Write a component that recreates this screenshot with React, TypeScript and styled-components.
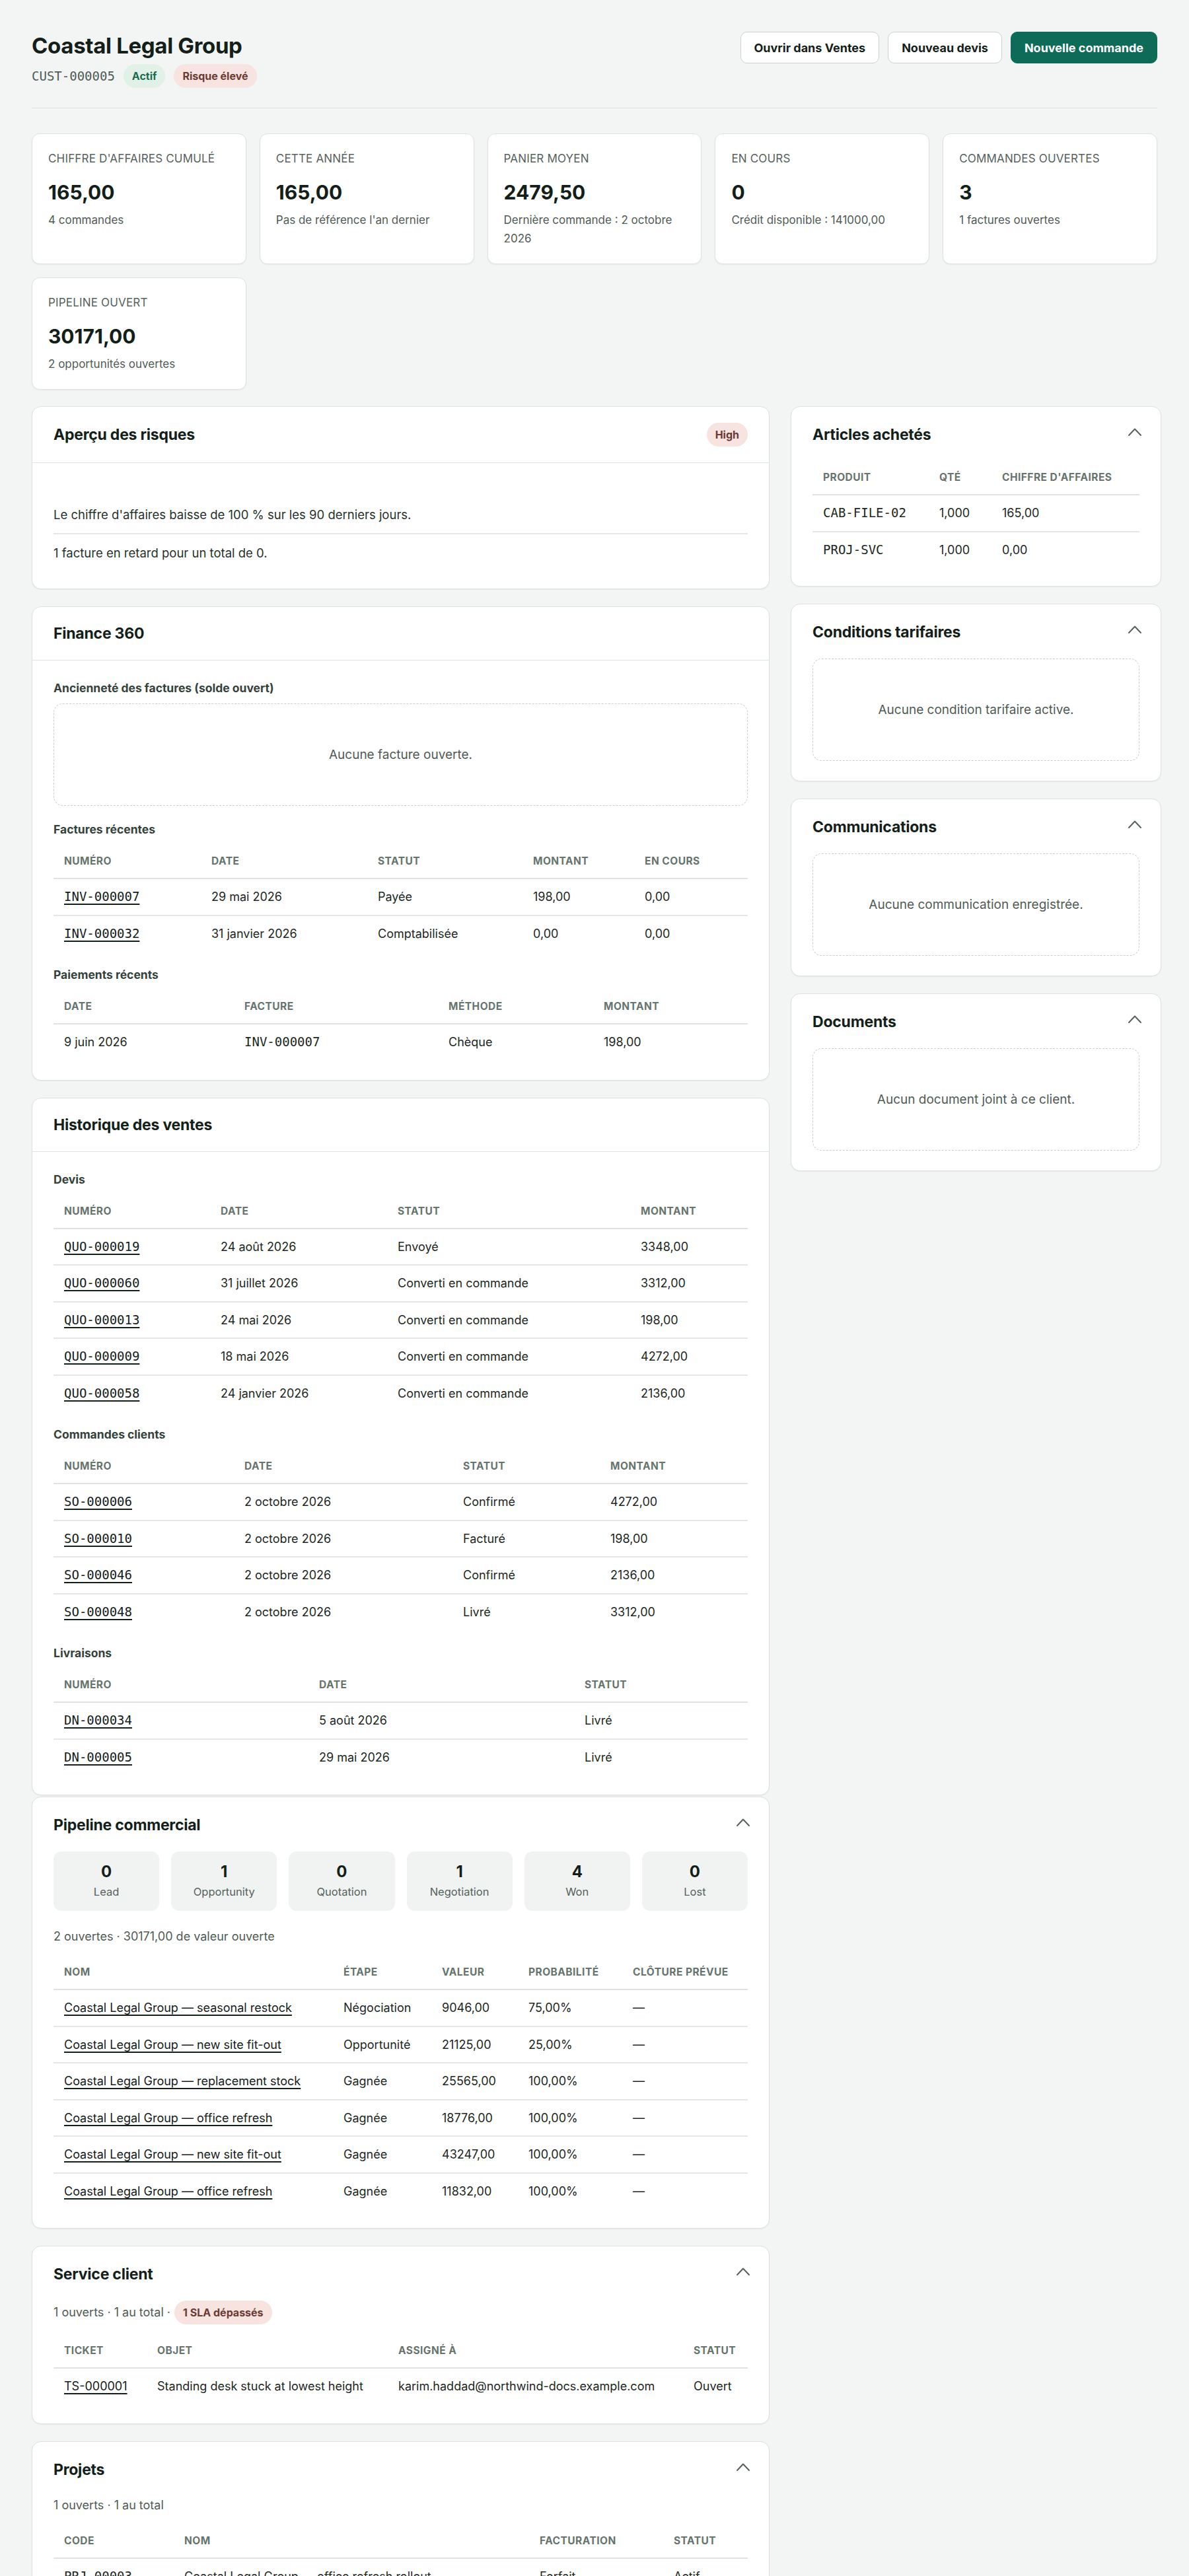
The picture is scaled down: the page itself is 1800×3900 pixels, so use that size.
import React from 'react';
import styled, { createGlobalStyle } from 'styled-components';

const GlobalStyle = createGlobalStyle`
  body {
    margin: 0;
    background: #f3f5f4;
    color: #13201a;
    font-family: Inter, 'Noto Sans', 'Liberation Sans', sans-serif;
    font-size: 18px;
  }
  * {
    box-sizing: border-box;
  }
`;

const MONO = "'DejaVu Sans Mono', 'Liberation Mono', monospace";

const Page = styled.div`
  padding: 48px;
`;

const Header = styled.header`
  display: flex;
  justify-content: space-between;
  align-items: flex-start;
  padding-bottom: 30px;
  border-bottom: 1px solid #dbe2df;
`;

const Title = styled.h1`
  margin: 0;
  font-size: 33px;
  line-height: 42px;
  font-weight: 700;
  letter-spacing: -0.01em;
`;

const Meta = styled.div`
  display: flex;
  align-items: center;
  gap: 13px;
  margin-top: 7px;
`;

const Mono = styled.span`
  font-family: ${MONO};
  font-size: 19px;
  line-height: 1;
`;

const MetaId = styled(Mono)`
  color: #4f5b55;
`;

const Badge = styled.span<{ $tone: 'green' | 'red' }>`
  display: inline-flex;
  align-items: center;
  height: 36px;
  padding: 0 13px;
  border-radius: 999px;
  font-size: 16px;
  font-weight: 700;
  background: ${(p) => (p.$tone === 'green' ? '#e2f1e8' : '#f7e3e0')};
  color: ${(p) => (p.$tone === 'green' ? '#1b6b4f' : '#6b3a33')};
`;

const Actions = styled.div`
  display: flex;
  gap: 13px;
`;

const Button = styled.button<{ $primary?: boolean }>`
  height: 48px;
  padding: 0 20px;
  border-radius: 10px;
  font-family: inherit;
  font-size: 18px;
  font-weight: 700;
  border: 1px solid ${(p) => (p.$primary ? '#0e6b58' : '#c9d2ce')};
  background: ${(p) => (p.$primary ? '#0e6b58' : '#fff')};
  color: ${(p) => (p.$primary ? '#fff' : '#13201a')};
`;

const KpiGrid = styled.div`
  display: grid;
  grid-template-columns: repeat(5, 1fr);
  gap: 20px;
  margin-top: 38px;
`;

const KpiCard = styled.div`
  background: #fff;
  border: 1px solid #dde3df;
  border-radius: 12px;
  padding: 24px;
  box-shadow: 0 1px 2px rgba(20, 32, 26, 0.06);
`;

const KpiLabel = styled.div`
  font-size: 17px;
  line-height: 26px;
  color: #56625c;
  text-transform: uppercase;
  letter-spacing: 0.01em;
`;

const KpiValue = styled.div`
  margin-top: 20px;
  font-size: 30px;
  line-height: 36px;
  font-weight: 700;
`;

const KpiSub = styled.div`
  margin-top: 10px;
  font-size: 17px;
  line-height: 28px;
  color: #4f5b55;
`;

const MainGrid = styled.div`
  display: grid;
  grid-template-columns: 2fr 1fr;
  gap: 32px;
  align-items: start;
  margin-top: 25px;
`;

const Column = styled.div`
  display: flex;
  flex-direction: column;
  gap: 26px;
`;

const Stack = styled.div`
  display: flex;
  flex-direction: column;
  gap: 2px;
`;

const Card = styled.section`
  background: #fff;
  border: 1px solid #dde3df;
  border-radius: 14px;
  box-shadow: 0 1px 2px rgba(20, 32, 26, 0.06);
  overflow: hidden;
`;

const CardHead = styled.div<{ $divided?: boolean }>`
  display: flex;
  justify-content: space-between;
  align-items: center;
  padding: ${(p) => (p.$divided ? '24px 32px' : '26px 32px 0')};
  border-bottom: ${(p) => (p.$divided ? '1px solid #dde3df' : 'none')};
`;

const CardTitle = styled.h2`
  margin: 0;
  font-size: 23px;
  line-height: 32px;
  font-weight: 700;
  letter-spacing: -0.01em;
`;

const Toggle = styled.svg`
  width: 22px;
  height: 16px;
  margin: -8px -4px 0 0;
  fill: none;
  stroke: #56625c;
  stroke-width: 2;
  stroke-linecap: round;
  stroke-linejoin: round;
`;

const CardBody = styled.div<{ $top?: number; $bottom?: number }>`
  padding: ${(p) => p.$top ?? 28}px 32px ${(p) => p.$bottom ?? 30}px;
  display: flex;
  flex-direction: column;
`;

const Block = styled.div`
  & + & {
    margin-top: 22px;
  }
`;

const SubTitle = styled.h3`
  margin: 0 0 9px;
  font-size: 17.5px;
  line-height: 28px;
  font-weight: 700;
  color: #34423b;
`;

const RiskList = styled.ul`
  list-style: none;
  margin: 0;
  padding: 0;
`;

const RiskItem = styled.li`
  padding: 14px 0;
  font-size: 18.5px;
  line-height: 28px;
  color: #26312c;
  & + & {
    border-top: 2px solid #e3e8e5;
  }
`;

const Empty = styled.div`
  height: 155px;
  display: flex;
  align-items: center;
  justify-content: center;
  border: 1.5px dashed #c8d0cc;
  border-radius: 14px;
  color: #4f5b55;
  font-size: 19px;
`;

const Table = styled.table`
  width: 100%;
  border-collapse: collapse;
  table-layout: fixed;
`;

const Col = styled.col<{ $w: number }>`
  width: ${(p) => p.$w}px;
`;

const Th = styled.th`
  text-align: left;
  padding: 13px 16px;
  font-size: 15.5px;
  line-height: 24px;
  font-weight: 700;
  letter-spacing: 0.03em;
  text-transform: uppercase;
  color: #66746d;
  border-bottom: 2px solid #dde3df;
  white-space: nowrap;
`;

const Td = styled.td`
  padding: 13px 16px 12.5px;
  height: 53.5px;
  font-size: 18px;
  line-height: 28px;
  color: #1c2722;
  white-space: nowrap;
  tr + tr > & {
    border-top: 2px solid #e3e8e5;
  }
`;

const Link = styled.a<{ $mono?: boolean }>`
  color: #13201a;
  text-decoration: underline;
  text-underline-offset: 4px;
  text-decoration-thickness: 1.5px;
  font-family: ${(p) => (p.$mono ? MONO : 'inherit')};
  font-size: ${(p) => (p.$mono ? '19px' : 'inherit')};
  line-height: ${(p) => (p.$mono ? 1 : 'inherit')};
`;

const Summary = styled.div`
  display: flex;
  align-items: center;
  gap: 6px;
  font-size: 18px;
  line-height: 28px;
  color: #4f5b55;
  margin-bottom: 15px;
`;

const Stages = styled.div`
  display: grid;
  grid-template-columns: repeat(6, 1fr);
  gap: 18px;
  margin-bottom: 25px;
`;

const Stage = styled.div`
  background: #f0f3f1;
  border-radius: 12px;
  padding: 15px 8px;
  text-align: center;
`;

const StageCount = styled.div`
  font-size: 24px;
  line-height: 32px;
  font-weight: 700;
`;

const StageLabel = styled.div`
  font-size: 16.5px;
  line-height: 28px;
  color: #56625c;
`;

type Cell = React.ReactNode;

const DataTable: React.FC<{ head: string[]; widths: number[]; rows: Cell[][] }> = ({
  head,
  widths,
  rows,
}) => (
  <Table>
    <colgroup>
      {widths.map((w, i) => (
        <Col key={i} $w={w} />
      ))}
    </colgroup>
    <thead>
      <tr>
        {head.map((h) => (
          <Th key={h}>{h}</Th>
        ))}
      </tr>
    </thead>
    <tbody>
      {rows.map((row, i) => (
        <tr key={i}>
          {row.map((c, j) => (
            <Td key={j}>{c}</Td>
          ))}
        </tr>
      ))}
    </tbody>
  </Table>
);

const Collapsible: React.FC<{ title: string; bottom?: number; children: React.ReactNode }> = ({
  title,
  bottom,
  children,
}) => (
  <Card>
    <CardHead>
      <CardTitle>{title}</CardTitle>
      <Toggle viewBox="0 0 22 16">
        <polyline points="2,13 11,3.5 20,13" />
      </Toggle>
    </CardHead>
    <CardBody $top={24} $bottom={bottom ?? 30}>
      {children}
    </CardBody>
  </Card>
);

const kpis = [
  { label: "Chiffre d'affaires cumulé", value: '165,00', sub: '4 commandes' },
  { label: 'Cette année', value: '165,00', sub: "Pas de référence l'an dernier" },
  { label: 'Panier moyen', value: '2479,50', sub: 'Dernière commande : 2 octobre 2026' },
  { label: 'En cours', value: '0', sub: 'Crédit disponible : 141000,00' },
  { label: 'Commandes ouvertes', value: '3', sub: '1 factures ouvertes' },
  { label: 'Pipeline ouvert', value: '30171,00', sub: '2 opportunités ouvertes' },
];

const link = (t: string) => (
  <Link $mono href="#">
    {t}
  </Link>
);

const quotes = [
  ['QUO-000019', '24 août 2026', 'Envoyé', '3348,00'],
  ['QUO-000060', '31 juillet 2026', 'Converti en commande', '3312,00'],
  ['QUO-000013', '24 mai 2026', 'Converti en commande', '198,00'],
  ['QUO-000009', '18 mai 2026', 'Converti en commande', '4272,00'],
  ['QUO-000058', '24 janvier 2026', 'Converti en commande', '2136,00'],
];

const orders = [
  ['SO-000006', '2 octobre 2026', 'Confirmé', '4272,00'],
  ['SO-000010', '2 octobre 2026', 'Facturé', '198,00'],
  ['SO-000046', '2 octobre 2026', 'Confirmé', '2136,00'],
  ['SO-000048', '2 octobre 2026', 'Livré', '3312,00'],
];

const deliveries = [
  ['DN-000034', '5 août 2026', 'Livré'],
  ['DN-000005', '29 mai 2026', 'Livré'],
];

const deals = [
  ['seasonal restock', 'Négociation', '9046,00', '75,00%'],
  ['new site fit-out', 'Opportunité', '21125,00', '25,00%'],
  ['replacement stock', 'Gagnée', '25565,00', '100,00%'],
  ['office refresh', 'Gagnée', '18776,00', '100,00%'],
  ['new site fit-out', 'Gagnée', '43247,00', '100,00%'],
  ['office refresh', 'Gagnée', '11832,00', '100,00%'],
];

const stages = [
  ['0', 'Lead'],
  ['1', 'Opportunity'],
  ['0', 'Quotation'],
  ['1', 'Negotiation'],
  ['4', 'Won'],
  ['0', 'Lost'],
];

const App: React.FC = () => (
  <>
    <GlobalStyle />
    <Page>
      <Header>
        <div>
          <Title>Coastal Legal Group</Title>
          <Meta>
            <MetaId>CUST-000005</MetaId>
            <Badge $tone="green">Actif</Badge>
            <Badge $tone="red">Risque élevé</Badge>
          </Meta>
        </div>
        <Actions>
          <Button>Ouvrir dans Ventes</Button>
          <Button>Nouveau devis</Button>
          <Button $primary>Nouvelle commande</Button>
        </Actions>
      </Header>

      <KpiGrid>
        {kpis.map((k) => (
          <KpiCard key={k.label}>
            <KpiLabel>{k.label}</KpiLabel>
            <KpiValue>{k.value}</KpiValue>
            <KpiSub>{k.sub}</KpiSub>
          </KpiCard>
        ))}
      </KpiGrid>

      <MainGrid>
        <Column>
          <Card>
            <CardHead $divided>
              <CardTitle>Aperçu des risques</CardTitle>
              <Badge $tone="red">High</Badge>
            </CardHead>
            <CardBody $top={50} $bottom={26}>
              <RiskList>
                <RiskItem>Le chiffre d'affaires baisse de 100 % sur les 90 derniers jours.</RiskItem>
                <RiskItem>1 facture en retard pour un total de 0.</RiskItem>
              </RiskList>
            </CardBody>
          </Card>

          <Card>
            <CardHead $divided>
              <CardTitle>Finance 360</CardTitle>
            </CardHead>
            <CardBody>
              <Block>
                <SubTitle>Ancienneté des factures (solde ouvert)</SubTitle>
                <Empty>Aucune facture ouverte.</Empty>
              </Block>
              <Block>
                <SubTitle>Factures récentes</SubTitle>
                <DataTable
                  head={['Numéro', 'Date', 'Statut', 'Montant', 'En cours']}
                  widths={[223, 252, 235, 169, 172]}
                  rows={[
                    [link('INV-000007'), '29 mai 2026', 'Payée', '198,00', '0,00'],
                    [link('INV-000032'), '31 janvier 2026', 'Comptabilisée', '0,00', '0,00'],
                  ]}
                />
              </Block>
              <Block>
                <SubTitle>Paiements récents</SubTitle>
                <DataTable
                  head={['Date', 'Facture', 'Méthode', 'Montant']}
                  widths={[273, 309, 235, 234]}
                  rows={[['9 juin 2026', <Mono>INV-000007</Mono>, 'Chèque', '198,00']]}
                />
              </Block>
            </CardBody>
          </Card>

          <Stack>
            <Card>
              <CardHead $divided>
                <CardTitle>Historique des ventes</CardTitle>
              </CardHead>
              <CardBody>
                <Block>
                  <SubTitle>Devis</SubTitle>
                  <DataTable
                    head={['Numéro', 'Date', 'Statut', 'Montant']}
                    widths={[237, 268, 368, 178]}
                    rows={quotes.map(([n, ...rest]) => [link(n), ...rest])}
                  />
                </Block>
                <Block>
                  <SubTitle>Commandes clients</SubTitle>
                  <DataTable
                    head={['Numéro', 'Date', 'Statut', 'Montant']}
                    widths={[273, 331, 223, 224]}
                    rows={orders.map(([n, ...rest]) => [link(n), ...rest])}
                  />
                </Block>
                <Block>
                  <SubTitle>Livraisons</SubTitle>
                  <DataTable
                    head={['Numéro', 'Date', 'Statut']}
                    widths={[386, 402, 263]}
                    rows={deliveries.map(([n, ...rest]) => [link(n), ...rest])}
                  />
                </Block>
              </CardBody>
            </Card>

            <Collapsible title="Pipeline commercial" bottom={29}>
              <Stages>
                {stages.map(([count, label]) => (
                  <Stage key={label}>
                    <StageCount>{count}</StageCount>
                    <StageLabel>{label}</StageLabel>
                  </Stage>
                ))}
              </Stages>
              <Summary>2 ouvertes · 30171,00 de valeur ouverte</Summary>
              <DataTable
                head={['Nom', 'Étape', 'Valeur', 'Probabilité', 'Clôture prévue']}
                widths={[423, 149, 131, 158, 190]}
                rows={deals.map(([name, stage, value, prob]) => [
                  <Link href="#">Coastal Legal Group — {name}</Link>,
                  stage,
                  value,
                  prob,
                  '—',
                ])}
              />
            </Collapsible>
          </Stack>

          <Collapsible title="Service client" bottom={29}>
            <Summary>
              1 ouverts · 1 au total · <Badge $tone="red">1 SLA dépassés</Badge>
            </Summary>
            <DataTable
              head={['Ticket', 'Objet', 'Assigné à', 'Statut']}
              widths={[141, 365, 447, 98]}
              rows={[
                [
                  <Link href="#">TS-000001</Link>,
                  'Standing desk stuck at lowest height',
                  'karim.haddad@northwind-docs.example.com',
                  'Ouvert',
                ],
              ]}
            />
          </Collapsible>

          <Collapsible title="Projets">
            <Summary>1 ouverts · 1 au total</Summary>
            <DataTable
              head={['Code', 'Nom', 'Facturation', 'Statut']}
              widths={[182, 538, 203, 128]}
              rows={[
                [
                  <Mono>PRJ-00003</Mono>,
                  'Coastal Legal Group — office refresh rollout',
                  'Forfait',
                  'Actif',
                ],
              ]}
            />
          </Collapsible>
        </Column>

        <Column>
          <Collapsible title="Articles achetés" bottom={28}>
            <DataTable
              head={['Produit', 'Qté', "Chiffre d'affaires"]}
              widths={[176, 95, 224]}
              rows={[
                [<Mono>CAB-FILE-02</Mono>, '1,000', '165,00'],
                [<Mono>PROJ-SVC</Mono>, '1,000', '0,00'],
              ]}
            />
          </Collapsible>
          <Collapsible title="Conditions tarifaires">
            <Empty>Aucune condition tarifaire active.</Empty>
          </Collapsible>
          <Collapsible title="Communications">
            <Empty>Aucune communication enregistrée.</Empty>
          </Collapsible>
          <Collapsible title="Documents">
            <Empty>Aucun document joint à ce client.</Empty>
          </Collapsible>
        </Column>
      </MainGrid>
    </Page>
  </>
);

export default App;
